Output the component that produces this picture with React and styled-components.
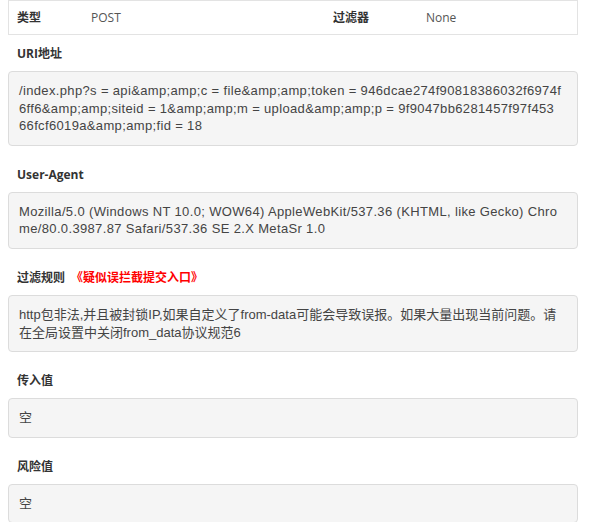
import React from "react";
import styled, { createGlobalStyle } from "styled-components";

const Global = createGlobalStyle`
  html, body { margin: 0; padding: 0; background: #fff; }
  body { font-family: "Open Sans", "Noto Sans CJK SC", sans-serif; }
`;

const Page = styled.div`
  padding: 0 14px 0 8px;
  font-family: "Open Sans", "Noto Sans CJK SC", sans-serif;
`;

const InfoTable = styled.div`
  display: grid;
  grid-template-columns: 74px 242px 93px 1fr;
  border: 1px solid #e3e3e3;
  height: 33px;
  align-items: center;
`;

const Cell = styled.div`
  padding: 0 8px;
  font-size: 12px;
  line-height: 17px;
  color: ${(p) => (p.$head ? "#333" : "#555")};
  font-weight: ${(p) => (p.$head ? 700 : 400)};
`;

const Section = styled.section`
  display: flex;
  flex-direction: column;
`;

const Label = styled.div`
  margin: ${(p) => (p.$first ? "10px" : "20px")} 0 9px 9px;
  font-size: 12px;
  line-height: 17px;
  font-weight: 700;
  color: #333;
`;

const Alert = styled.span`
  margin-left: 6px;
  color: #ff0000;
  font-weight: 700;
`;

const Box = styled.div`
  background: #f5f5f5;
  border: 1px solid #dcdcdc;
  border-radius: 4px;
  padding: 10px 10px;
  font-family: "Liberation Sans", "Noto Sans CJK SC", sans-serif;
  font-size: 13px;
  letter-spacing: ${(p) => (p.$cjk ? "0" : "0.35px")};
  line-height: 17.6px;
  color: #444;
  white-space: pre-line;
  word-break: break-all;
`;

const uri =
  "/index.php?s = api&amp;amp;c = file&amp;amp;token = 946dcae274f90818386032f6974f\n6ff6&amp;amp;siteid = 1&amp;amp;m = upload&amp;amp;p = 9f9047bb6281457f97f453\n66fcf6019a&amp;amp;fid = 18";

const ua =
  "Mozilla/5.0 (Windows NT 10.0; WOW64) AppleWebKit/537.36 (KHTML, like Gecko) Chro\nme/80.0.3987.87 Safari/537.36 SE 2.X MetaSr 1.0";

const rule =
  "http包非法,并且被封锁IP,如果自定义了from-data可能会导致误报。如果大量出现当前问题。请\n在全局设置中关闭from_data协议规范6";

export default function App() {
  return (
    <>
      <Global />
      <Page>
        <InfoTable>
          <Cell $head>类型</Cell>
          <Cell>POST</Cell>
          <Cell $head>过滤器</Cell>
          <Cell>None</Cell>
        </InfoTable>

        <Section>
          <Label $first>URI地址</Label>
          <Box>{uri}</Box>
        </Section>

        <Section>
          <Label>User-Agent</Label>
          <Box>{ua}</Box>
        </Section>

        <Section>
          <Label>
            过滤规则<Alert>《疑似误拦截提交入口》</Alert>
          </Label>
          <Box $cjk>{rule}</Box>
        </Section>

        <Section>
          <Label>传入值</Label>
          <Box $cjk>空</Box>
        </Section>

        <Section>
          <Label>风险值</Label>
          <Box $cjk>空</Box>
        </Section>
      </Page>
    </>
  );
}
